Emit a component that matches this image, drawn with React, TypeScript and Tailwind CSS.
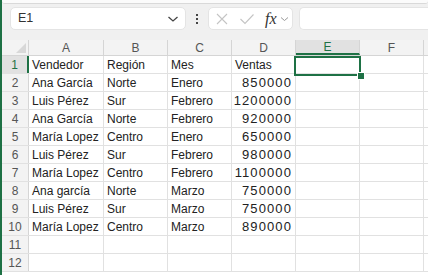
import React from "react"

const cols = [
  { key: "A", w: "w-[75px]" },
  { key: "B", w: "w-[64px]" },
  { key: "C", w: "w-[64px]" },
  { key: "D", w: "w-[64px]" },
  { key: "E", w: "w-[64px]" },
  { key: "F", w: "w-[64px]" },
  { key: "G", w: "w-[64px]" },
]

const rows: (string | number)[][] = [
  ["Vendedor", "Región", "Mes", "Ventas"],
  ["Ana García", "Norte", "Enero", 850000],
  ["Luis Pérez", "Sur", "Febrero", 1200000],
  ["Ana García", "Norte", "Febrero", 920000],
  ["María Lopez", "Centro", "Enero", 650000],
  ["Luis Pérez", "Sur", "Febrero", 980000],
  ["María Lopez", "Centro", "Febrero", 1100000],
  ["Ana garcía", "Norte", "Marzo", 750000],
  ["Luis Pérez", "Sur", "Marzo", 750000],
  ["María Lopez", "Centro", "Marzo", 890000],
  [],
  [],
]

export default function App() {
  return (
    <div className="relative w-[428px] h-[275px] overflow-hidden bg-white border-l-2 border-[#1e7145] font-['Liberation_Sans',Arial,sans-serif] text-[12px] text-[#222]">
      {/* top bar */}
      <div className="bg-[#f0f0f0] h-[40px]">
        <div className="h-[4px] bg-[#fbfbfb] border-b border-[#d9d9d9] rounded-b-[3px]" />
        <div className="flex items-center h-[28px] pt-[1px] pl-[8px]">
          <div className="flex items-center justify-between w-[176px] h-[23px] bg-white rounded-[5px] border border-[#e4e4e4] pl-[7px] pr-[6px]">
            <span className="text-[12.5px] text-[#333]">E1</span>
            <svg width="12" height="8" viewBox="0 0 12 8" fill="none">
              <path d="M1.5 2 L6 6 L10.5 2" stroke="#444" strokeWidth="1.3" />
            </svg>
          </div>
          <div className="w-[22px] flex flex-col items-center gap-[2px]">
            <span className="w-[2px] h-[2px] bg-[#444]" />
            <span className="w-[2px] h-[2px] bg-[#444]" />
            <span className="w-[2px] h-[2px] bg-[#444]" />
          </div>
          <div className="flex items-center w-[85px] h-[23px] bg-white rounded-[5px] border border-[#e4e4e4] pl-[6px]">
            <svg width="14" height="14" viewBox="0 0 14 14" fill="none">
              <path d="M2 2 L12 12 M12 2 L2 12" stroke="#c4c4c4" strokeWidth="1.1" />
            </svg>
            <svg width="16" height="14" viewBox="0 0 16 14" className="ml-[10px]" fill="none">
              <path d="M1.5 7 L6 11.5 L14.5 2.5" stroke="#c4c4c4" strokeWidth="1.1" />
            </svg>
            <span className="ml-[10px] font-['Liberation_Serif',serif] italic text-[16px] text-[#333] leading-none">fx</span>
            <svg width="9" height="6" viewBox="0 0 9 6" className="ml-[3px]" fill="none">
              <path d="M1 1.5 L4.5 4.5 L8 1.5" stroke="#999" strokeWidth="1" />
            </svg>
          </div>
          <div className="ml-[6px] flex-1 h-[23px] bg-white rounded-l-[5px] border border-r-0 border-[#e4e4e4]" />
        </div>
      </div>

      {/* column headers */}
      <div className="flex h-[16px] bg-[#f3f3f3] border-b border-[#d5d5d5]">
        <div className="relative w-[27px] shrink-0 border-r border-[#d5d5d5]">
          <svg width="10" height="10" viewBox="0 0 10 10" className="absolute right-[2px] bottom-[2px]">
            <path d="M10 0 L10 10 L0 10 Z" fill="#d8d8d8" />
          </svg>
        </div>
        {cols.map((c) => (
          <div
            key={c.key}
            className={`${c.w} shrink-0 flex items-center justify-center border-r border-[#d5d5d5] ${
              c.key === "E" ? "bg-[#e1e1e1] text-[#1e7145] border-b-2 border-b-[#1e7145]" : "text-[#555]"
            }`}
          >
            {c.key === "G" ? "" : c.key}
          </div>
        ))}
      </div>

      {/* rows */}
      {rows.map((r, i) => (
        <div key={i} className="flex h-[18px] border-b border-[#e1e1e1]">
          <div
            className={`w-[27px] shrink-0 flex items-center justify-center border-r ${
              i === 0
                ? "bg-[#e1e1e1] text-[#1e7145] border-r-2 border-r-[#1e7145]"
                : "bg-[#f3f3f3] text-[#555] border-[#d5d5d5]"
            }`}
          >
            {i + 1}
          </div>
          {cols.map((c, j) => {
            const v = r[j]
            const num = typeof v === "number"
            return (
              <div
                key={c.key}
                className={`${c.w} shrink-0 flex items-center border-r border-[#e1e1e1] px-[3px] whitespace-nowrap overflow-hidden ${
                  num ? "justify-end text-[13px] tracking-[1.1px]" : ""
                }`}
              >
                {v ?? ""}
              </div>
            )
          })}
        </div>
      ))}

      {/* selection on E1 */}
      <div className="absolute left-[292px] top-[56px] w-[67px] h-[20px] border-2 border-[#1e7145] pointer-events-none" />
      <div className="absolute left-[355px] top-[72px] w-[6px] h-[6px] bg-[#1e7145] border border-white box-content" />
    </div>
  )
}
